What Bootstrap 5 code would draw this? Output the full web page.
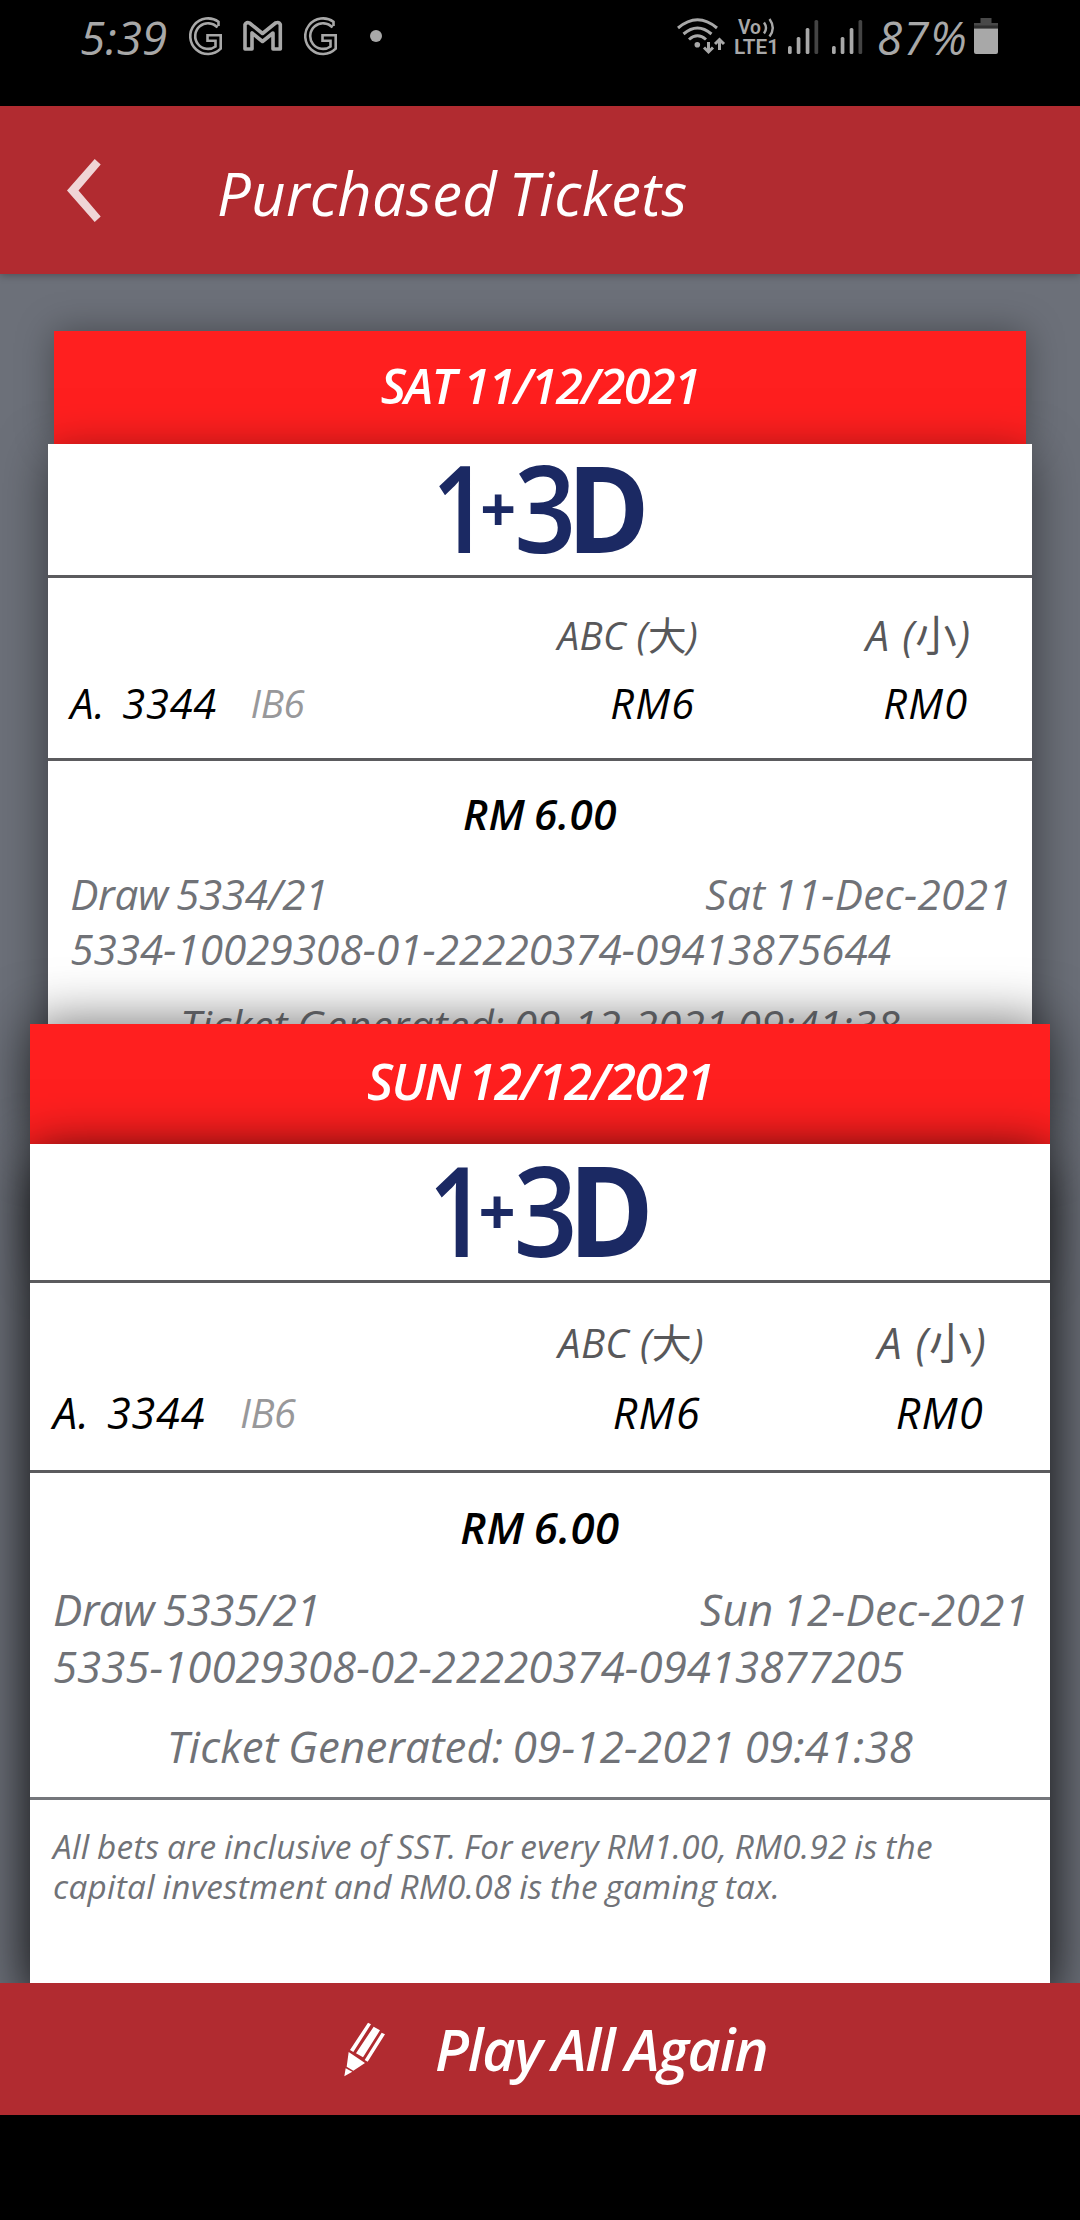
<!doctype html>
<html lang="en">
<head>
<meta charset="utf-8">
<meta name="viewport" content="width=device-width, initial-scale=1">
<title>Purchased Tickets</title>
<link href="https://cdn.jsdelivr.net/npm/bootstrap@5.3.0/dist/css/bootstrap.min.css" rel="stylesheet">
<style>
  body { font-family: "Open Sans", "Noto Sans CJK SC", sans-serif; font-style: italic; background: #000; width: 1080px; height: 2220px; overflow: hidden; }
  svg { display: block; flex: none; }
  .status { height: 106px; color: #a8a8a8; font-size: 45.8px; line-height: 74px; padding-left: 80px; padding-right: 81px; }
  .status svg { height: 106px; fill: #a8a8a8; }
  .clock { width: 108px; }
  .level { width: 97px; letter-spacing: .03em; }
  .outline-icon { fill: none !important; stroke: #a8a8a8; }
  .appbar { height: 168px; background: #b12b30; box-shadow: 0 1px 8px rgba(0,0,0,.3); z-index: 3; padding-left: 67px; }
  .appbar h1 { font-size: 59.7px; line-height: 1; margin: 5px 0 0 116px; word-spacing: -.07em; letter-spacing: .006em; }
  .deck { height: 1709px; background: #6c7079; padding-top: 57px; }
  .ticket-one { --u: .9647px; height: 693px; --pad: 48px; }
  .ticket-two { --u: 1px; --pad: 30px; }
  .ticket { padding: 0 var(--pad); }
  .day { background: #ff1f1f; color: #fff; font-weight: 600; letter-spacing: -.033em; word-spacing: -.06em; font-size: calc(50.5 * var(--u)); line-height: 1; }
  .ticket-one .day { height: 113px; margin: 0 6px; box-shadow: 0 0 34px rgba(0,0,0,.35); padding-bottom: 4px; }
  .ticket-two .day { height: 120px; box-shadow: 0 0 56px rgba(0,0,0,.6); padding-bottom: 5px; }
  .slip { background: #fff; width: calc(1020 * var(--u)); height: calc(845 * var(--u)); box-shadow: 0 10px 44px rgba(0,0,0,.5); }
  .ticket-two .slip { box-shadow: 0 12px 52px rgba(0,0,0,.95); }
  .brand-row, .bets, .summary { border-bottom: 3px solid #5b5b5e; }
  .brand-row { height: calc(139 * var(--u)); }
  .brand-row svg { width: calc(300 * var(--u)); height: calc(136 * var(--u)); }
  .brand-row text { font-family: "Open Sans", sans-serif; font-style: normal; fill: #1b2963; font-weight: 600; }
  .bets { height: calc(190 * var(--u)); padding: calc(25 * var(--u)) calc(63 * var(--u)) 0 calc(23 * var(--u)); font-size: calc(43.1 * var(--u)); color: #000; }
  .bets .kinds { line-height: calc(69 * var(--u)); color: #58585a; }
  .bets .stakes { line-height: calc(72 * var(--u)); }
  .bets .kinds > span { padding-right: 0; white-space: nowrap; }
  .kinds .small-bet { letter-spacing: .03em; }
  .kinds .big { letter-spacing: .01em; }
  .kinds i { font-style: normal; }
  .big { width: calc(250 * var(--u)); font-size: calc(40 * var(--u)); padding-right: calc(3 * var(--u)); }
  .small-bet { width: calc(283 * var(--u)); padding-right: calc(3 * var(--u)); }
  .stakes .big { font-size: inherit; letter-spacing: .03em; }
  .stakes .small-bet { letter-spacing: .03em; }
  .pick { width: calc(187 * var(--u)); white-space: nowrap; word-spacing: .13em; letter-spacing: .018em; }
  .code { color: #98989a; font-size: calc(40 * var(--u)); letter-spacing: -.01em; }
  .summary { height: calc(327 * var(--u)); border-color: #74767b; padding: calc(18 * var(--u)) calc(23 * var(--u)) 0; color: #707277; font-size: calc(43.8 * var(--u)); line-height: calc(57 * var(--u)); }
  .total { color: #000; font-weight: 600; word-spacing: -.06em; letter-spacing: .01em; line-height: calc(72 * var(--u)); margin-bottom: calc(18 * var(--u)); }
  .draw-no { word-spacing: -.06em; letter-spacing: -.008em; }
  .draw-date { word-spacing: -.06em; letter-spacing: .007em; margin-right: -2px; }
  .made { line-height: calc(60 * var(--u)); margin-top: calc(21 * var(--u)); word-spacing: -.05em; letter-spacing: .005em; }
  .terms { color: #707277; font-size: calc(33.3 * var(--u)); line-height: calc(40 * var(--u)); padding: calc(26 * var(--u)) calc(23 * var(--u)); word-spacing: -.04em; letter-spacing: .009em; }
  .replay { height: 132px; background: #b12b30; color: #fff; font-weight: 600; letter-spacing: -.022em; word-spacing: -.05em; font-size: 57.7px; line-height: 1; padding-left: 343px; z-index: 3; border: 0; }
  .replay svg { margin-right: 48px; }
</style>
</head>
<body>
<header class="status d-flex justify-content-between">
  <div class="d-flex">
    <span class="clock">5:39</span>
    <svg class="outline-icon" width="36" viewBox="188 0 36 106" stroke-width="2.6"><path id="gee" d="M218.5 26V21.8A17.8 17.8 0 1 0 220.7 48.7V35.2H207.5V40.8H215.5V46.5A12.8 12.8 0 1 1 217.5 27.5"/></svg>
    <svg class="outline-icon ms-3" width="48" viewBox="240 0 48 106" stroke-width="3.6" stroke-linejoin="round"><path d="M245 49V24.500Q246.500 21.500 249.500 23L262.500 33.500 275.500 23Q279 21.500 280.300 24.500V49H273V33L262.500 41.500 252 33V49Z"/></svg>
    <svg class="outline-icon ms-3" width="36" viewBox="189 0 36 106" stroke-width="2.6"><use href="#gee"/></svg>
    <svg width="20" class="ms-4" viewBox="364 0 20 106"><circle cx="376" cy="36" r="6"/></svg>
  </div>
  <div class="d-flex">
    <svg width="58" viewBox="675 0 58 106"><g fill="none" stroke="#a8a8a8" stroke-width="3"><path d="M677 28Q696.500 11.500 716 28M682.500 34Q696.500 22 710.500 34M688 39.500Q696.500 32 705 39.500"/><path d="M707.500 42V52M703 47.500L707.500 52 712 47.500M718.500 50V40M714 44L718.500 39.500 723 44" /></g><circle cx="696.300" cy="44.700" r="2.800"/></svg>
    <svg width="53" viewBox="733 0 53 106"><g font-family="Roboto" font-style="normal" font-weight="600"><text x="737" y="34" font-size="20" textLength="23" lengthAdjust="spacingAndGlyphs">Vo</text><text x="733" y="54" font-size="21" textLength="45" lengthAdjust="spacingAndGlyphs">LTE1</text></g><path d="M763 22.500Q767 28 763 33.500M768.500 19Q775 28 768.500 36.500" fill="none" stroke="#a8a8a8" stroke-width="2.400"/></svg>
    <svg width="90" viewBox="786 0 90 106"><g id="bars"><rect x="787" y="46" width="3.700" height="8" rx="1.500"/><rect x="795.700" y="37" width="3.700" height="17" rx="1.500"/><rect x="804.700" y="28" width="3.700" height="26" rx="1.500"/><rect x="813.500" y="20" width="3.700" height="34" rx="1.500" fill="#444"/></g><use href="#bars" x="44"/></svg>
    <span class="level">87%</span>
    <svg width="25" viewBox="975 0 25 106"><path d="M981.500 18H992.500V23H999V28H975V23H981.500Z" fill="#484848"/><path d="M975 25.500H999V28.500H975Z" fill="#2e2e2e"/><path d="M975 28.500H999V52Q999 54 997 54H977Q975 54 975 52Z"/></svg>
  </div>
</header>

<nav class="appbar position-relative d-flex align-items-center text-white">
  <svg width="34" height="63" viewBox="67 158.500 34 63" fill="#f0d5d6"><path d="M67 190 94.700 158.500 100.700 164 78.500 190 100.700 216 94.700 221.500Z"/></svg>
  <h1 class="fw-normal">Purchased Tickets</h1>
</nav>

<main class="deck overflow-hidden">
  <article class="ticket ticket-one position-relative">
    <div class="day d-flex align-items-center justify-content-center">SAT 11/12/2021</div>
    <div class="slip">
      <div class="brand-row d-flex justify-content-center">
        <svg viewBox="390 1144 300 136"><g id="brand" font-size="125"><text transform="translate(428 1257) scale(.83 1)">1</text><text x="478.500" y="1235" font-size="65" style="font-weight:700">+</text><text transform="translate(513.500 1257) scale(.9 1)">3</text><text transform="translate(568 1257) scale(.93 1)" style="font-weight:700">D</text></g></svg>
      </div>
      <div class="bets">
        <div class="kinds d-flex justify-content-end"><span class="big text-end">ABC (<i>大</i>)</span><span class="small-bet text-end">A (<i>小</i>)</span></div>
        <div class="stakes d-flex"><span class="pick">A. 3344</span><span class="code flex-grow-1">IB6</span><span class="big text-end">RM6</span><span class="small-bet text-end">RM0</span></div>
      </div>
      <div class="summary">
        <div class="total text-center">RM 6.00</div>
        <div class="d-flex justify-content-between"><span class="draw-no">Draw 5334/21</span><span class="draw-date">Sat 11-Dec-2021</span></div>
        <div>5334-10029308-01-22220374-09413875644</div>
        <div class="made text-center">Ticket Generated: 09-12-2021 09:41:38</div>
      </div>
    </div>
  </article>

  <article class="ticket ticket-two position-relative">
    <div class="day d-flex align-items-center justify-content-center">SUN 12/12/2021</div>
    <div class="slip">
      <div class="brand-row d-flex justify-content-center">
        <svg viewBox="390 1144 300 136"><use href="#brand"/></svg>
      </div>
      <div class="bets">
        <div class="kinds d-flex justify-content-end"><span class="big text-end">ABC (<i>大</i>)</span><span class="small-bet text-end">A (<i>小</i>)</span></div>
        <div class="stakes d-flex"><span class="pick">A. 3344</span><span class="code flex-grow-1">IB6</span><span class="big text-end">RM6</span><span class="small-bet text-end">RM0</span></div>
      </div>
      <div class="summary">
        <div class="total text-center">RM 6.00</div>
        <div class="d-flex justify-content-between"><span class="draw-no">Draw 5335/21</span><span class="draw-date">Sun 12-Dec-2021</span></div>
        <div>5335-10029308-02-22220374-09413877205</div>
        <div class="made text-center">Ticket Generated: 09-12-2021 09:41:38</div>
      </div>
      <div class="terms">All bets are inclusive of SST. For every RM1.00, RM0.92 is the<br>capital investment and RM0.08 is the gaming tax.</div>
    </div>
  </article>
</main>

<button type="button" class="replay position-relative w-100 d-flex align-items-center fst-italic">
  <svg width="44" height="57" viewBox="100 95 132 171" fill="#fff"><path d="M175 100 184 105 131 188 121 182ZM192 112 211 123 160 204 139 192ZM216 130 226 135 174 217 165 212ZM117 188 166 221 131 244 111 232ZM108 237 128 247 104 261Z"/></svg>
  <span>Play All Again</span>
</button>
<script src="https://cdn.jsdelivr.net/npm/bootstrap@5.3.0/dist/js/bootstrap.bundle.min.js"></script>
</body>
</html>
